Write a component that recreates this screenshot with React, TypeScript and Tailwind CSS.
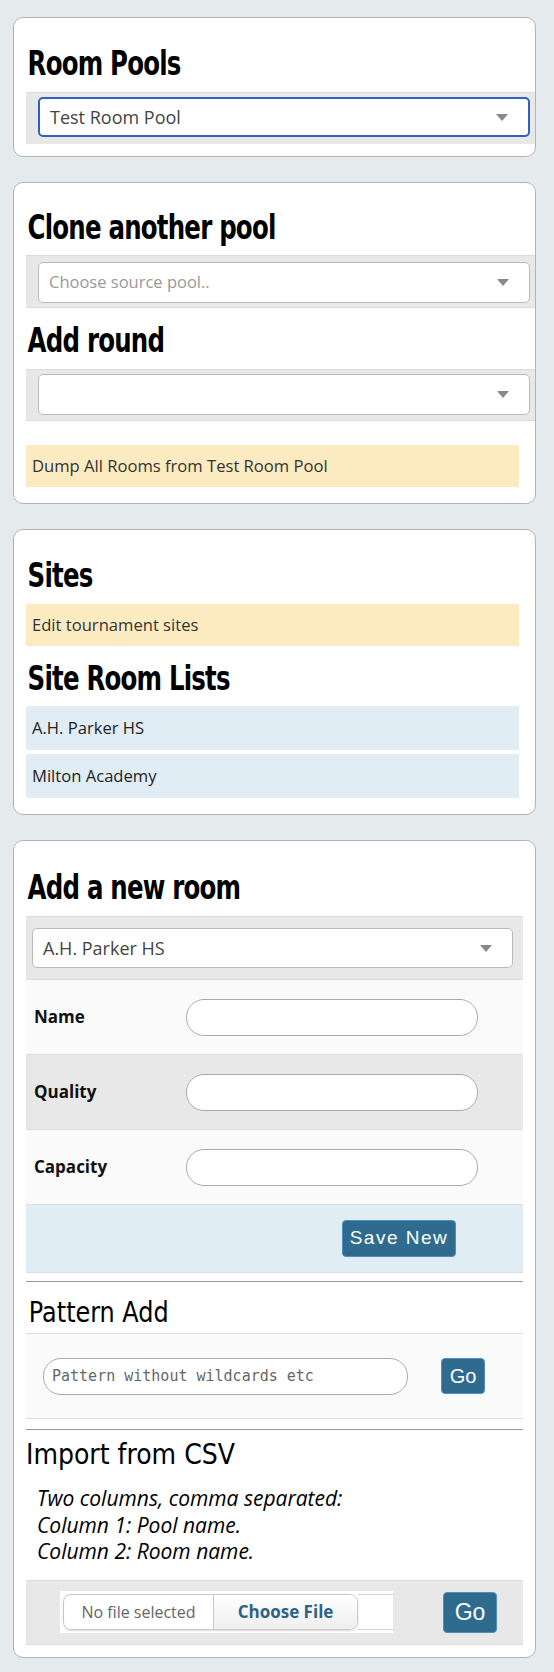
import React from 'react';

const head = "font-['Liberation_Sans_Narrow','DejaVu_Sans_Condensed',sans-serif]";
const body = "font-['Open_Sans',sans-serif]";

const Arrow = () => (
  <svg width="12" height="7" viewBox="0 0 12 7" className="shrink-0">
    <polygon points="0,0 12,0 6,7" fill="#888" />
  </svg>
);

interface SelectBoxProps {
  value?: string;
  placeholder?: string;
  focused?: boolean;
  className?: string;
}

const SelectBox: React.FC<SelectBoxProps> = ({ value, placeholder, focused, className }) => (
  <div
    className={`flex items-center justify-between bg-white rounded-[5px] pl-[10px] pr-[20px] ${
      focused ? 'border-2 border-[#2f60c6]' : 'border border-[#bbb]'
    } ${className ?? ''}`}
  >
    <span className={value ? 'text-[18px] text-[#444]' : 'text-[16.5px] text-[#999]'}>{value ?? placeholder ?? ''}</span>
    <Arrow />
  </div>
);

const Heading: React.FC<{ children: React.ReactNode; className?: string }> = ({ children, className }) => (
  <h2
    className={`${head} font-bold text-[34px] leading-[40px] tracking-[-1px] text-black whitespace-nowrap pl-[2px] origin-left scale-x-[0.8] ${className ?? ''}`}
  >
    {children}
  </h2>
);

const Card: React.FC<{ children: React.ReactNode; className?: string }> = ({ children, className }) => (
  <div className={`w-[523px] bg-white border border-[#b3b3b3] rounded-[10px] ${className ?? ''}`}>{children}</div>
);

const FieldRow: React.FC<{ label: string; bg: string }> = ({ label, bg }) => (
  <div className={`flex items-center h-[75px] border-b border-[#dedede] ${bg}`}>
    <span className="w-[160px] pl-[8px] text-[17px] font-bold text-[#111]">{label}</span>
    <input className="w-[292px] h-[37px] rounded-[18px] border border-[#aaa] bg-white outline-none px-3" />
  </div>
);

export default function App() {
  return (
    <div className={`${body} w-[554px] min-h-[1672px] bg-[#e5eaed] pt-[17px] pl-[13px] flex flex-col gap-[25px]`}>
      <Card className="pl-[12px] pt-[25px] pb-[12px]">
        <Heading className="mb-[9px]">Room Pools</Heading>
        <div className="bg-[#e8e8e8] border-t border-[#dcdcdc] pt-[4px] pb-[7px] pl-[12px] pr-[5px]">
          <SelectBox value="Test Room Pool" focused className="h-[40px]" />
        </div>
      </Card>

      <Card className="pl-[12px] pt-[24px] pb-[16px]">
        <Heading className="mb-[8px]">Clone another pool</Heading>
        <div className="bg-[#e8e8e8] border-y border-[#dcdcdc] pt-[6px] pb-[4px] pl-[12px] pr-[5px]">
          <SelectBox placeholder="Choose source pool.." className="h-[41px]" />
        </div>
        <Heading className="mt-[12px] mb-[9px]">Add round</Heading>
        <div className="bg-[#e8e8e8] border-y border-[#dcdcdc] pt-[4px] pb-[5px] pl-[12px] pr-[5px]">
          <SelectBox className="h-[41px]" />
        </div>
        <div className="mt-[24px] mr-[16px] h-[42px] bg-[#fcebc1] flex items-center pl-[6px] text-[16.6px] text-[#333]">
          Dump All Rooms from Test Room Pool
        </div>
      </Card>

      <Card className="pl-[12px] pr-[16px] pt-[25px] pb-[16px]">
        <Heading className="mb-[9px]">Sites</Heading>
        <div className="h-[42px] bg-[#fcebc1] flex items-center pl-[6px] text-[16.6px] text-[#333]">
          Edit tournament sites
        </div>
        <Heading className="mt-[12px] mb-[8px]">Site Room Lists</Heading>
        <div className="flex flex-col gap-[4px]">
          <div className="h-[44px] bg-[#e1edf5] flex items-center pl-[6px] text-[16.6px] text-[#222]">A.H. Parker HS</div>
          <div className="h-[44px] bg-[#e1edf5] flex items-center pl-[6px] text-[16.6px] text-[#222]">Milton Academy</div>
        </div>
      </Card>

      <Card className="pl-[12px] pr-[12px] pt-[26px] pb-[12px]">
        <Heading className="mb-[9px]">Add a new room</Heading>
        <div className="bg-[#e8e8e8] border-y border-[#dcdcdc] py-[11px] pl-[6px] pr-[10px]">
          <SelectBox value="A.H. Parker HS" className="h-[40px]" />
        </div>
        <FieldRow label="Name" bg="bg-[#fafafa]" />
        <FieldRow label="Quality" bg="bg-[#e8e8e8]" />
        <FieldRow label="Capacity" bg="bg-[#fafafa]" />
        <div className="h-[68px] bg-[#e1edf5] border-b border-[#dedede] flex items-center pl-[316px]">
          <button className="h-[37px] w-[114px] rounded-[4px] bg-[#2e6b8f] border border-[#4f8fbc] text-white text-[19px] tracking-[1.5px] font-['Liberation_Sans',sans-serif]">
            Save New
          </button>
        </div>

        <div className="mt-[8px] border-t border-[#999]" />
        <h3 className={`${head} text-[28px] leading-[32px] text-black mt-[15px] mb-[4px] pl-[3px] origin-left scale-x-[0.95] whitespace-nowrap`}>
          Pattern Add
        </h3>
        <div className="bg-[#fafafa] border-y border-[#dedede] h-[86px] flex items-center pl-[17px]">
          <input
            placeholder="Pattern without wildcards etc"
            className="w-[365px] h-[37px] rounded-[18px] border border-[#aaa] bg-white outline-none px-[8px] text-[15px] font-['DejaVu_Sans_Mono',monospace] placeholder:text-[#666]"
          />
          <button className="ml-[33px] h-[36px] w-[44px] rounded-[4px] bg-[#2e6b8f] border border-[#4f8fbc] text-white text-[20px] font-['Liberation_Sans',sans-serif]">
            Go
          </button>
        </div>
        <div className="mt-[10px] border-t border-[#999]" />
        <h3 className={`${head} text-[28px] leading-[32px] text-black mt-[9px]`}>Import from CSV</h3>
        <div className="mt-[14px] pl-[11px] italic text-[21px] leading-[26.5px] text-black">
          <div>Two columns, comma separated:</div>
          <div>Column 1: Pool name.</div>
          <div>Column 2: Room name.</div>
        </div>
        <div className="mt-[15px] bg-[#e8e8e8] border-y border-[#dcdcdc] h-[65px] flex items-center pl-[34px]">
          <div className="w-[333px] h-[42px] bg-white flex items-center pl-[3px]">
            <div className="w-[295px] h-[36px] rounded-[8px] border border-[#c8c8c8] shadow-[0_1px_2px_rgba(0,0,0,0.15)] flex overflow-hidden">
              <div className="w-[150px] flex items-center justify-center text-[16px] text-[#666] border-r border-[#c8c8c8]">
                No file selected
              </div>
              <div className="flex-1 flex items-center justify-center text-[17px] font-bold text-[#2d6386] bg-gradient-to-b from-white to-[#eeeeee]">
                Choose File
              </div>
            </div>
            <div className="flex-1 h-[36px] border-y border-[#d5d5d5]" />
          </div>
          <button className="ml-[50px] h-[41px] w-[54px] rounded-[4px] bg-[#2e6b8f] border border-[#4f8fbc] text-white text-[23px] font-['Liberation_Sans',sans-serif]">
            Go
          </button>
        </div>
      </Card>
    </div>
  );
}
